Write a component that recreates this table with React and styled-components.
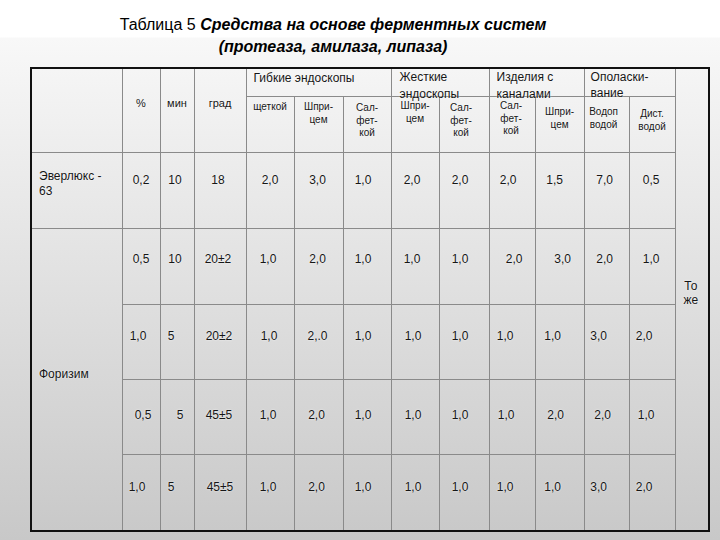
import React from 'react'
import styled, { createGlobalStyle } from 'styled-components'

const GlobalStyle = createGlobalStyle`
  html, body {
    margin: 0;
    padding: 0;
  }

  body {
    width: 720px;
    height: 540px;
    overflow: hidden;
    font-family: 'Liberation Sans', Arial, sans-serif;
    color: #111;
    background: linear-gradient(to bottom, #fff 0px, #fff 37px, #f8f8f8 38px, #c8c8c8 540px);
  }
`

const Slide = styled.div`
  width: 720px;
  height: 540px;
  box-sizing: border-box;
  padding-top: 14px;
`

const Title = styled.h1`
  margin: 0;
  width: 666px;
  text-align: center;
  font-size: 16px;
  line-height: 22px;
  font-weight: normal;
  color: #000;
`

const Accent = styled.em`
  font-weight: bold;
  font-style: italic;
`

const Table = styled.table`
  margin: 9px 0 0 30px;
  border-collapse: collapse;
  table-layout: fixed;
  width: 678px;
  border: 2px solid #111;
`

const Row = styled.tr`
  height: ${p => p.$h}px;
`

const Cell = styled.td`
  box-sizing: border-box;
  border: 1px solid #8a8a8a;
  vertical-align: top;
  text-align: center;
  font-size: 12px;
  line-height: 14px;
  color: #161616;
  padding: ${p => p.$top || 0}px ${p => (p.$dx < 0 ? -2 * p.$dx : 0)}px 0 ${p => (p.$dx > 0 ? 2 * p.$dx : 0)}px;
  text-shadow: 0 0 2px rgba(255, 255, 255, 0.9);
`

const NameCell = styled(Cell)`
  text-align: left;
  padding-left: 7px;
  line-height: 15px;
`

const UnitCell = styled(Cell)`
  font-size: 11px;
`

const GroupCell = styled(Cell)`
  text-align: left;
  padding-left: ${p => p.$left}px;
  line-height: ${p => p.$lh}px;
`

const GroupText = styled.div`
  height: 26px;
  overflow: visible;
  white-space: nowrap;
`

const SubCell = styled(Cell)`
  font-size: 10px;
  line-height: 12.5px;
`

const SideCell = styled(Cell)`
  line-height: 14px;
  padding-left: 0;
  padding-right: 2px;
`

const widths = [91, 38, 34, 52, 48, 49, 48, 48, 50, 46, 49, 45, 46, 34]

const groups = [
  { span: 3, left: 7, lh: 16, top: 1, lines: ['Гибкие эндоскопы'] },
  { span: 2, left: 8, lh: 17, top: 0, lines: ['Жесткие', 'эндоскопы'] },
  { span: 2, left: 7, lh: 17, top: 0, lines: ['Изделия с', 'каналами'] },
  { span: 2, left: 6, lh: 16, top: 0, lines: ['Ополаски-', 'вание'] },
]

const subs = [
  { top: 4, dx: 0, lines: ['щеткой'] },
  { top: 4, dx: 0, lines: ['Шпри-', 'цем'] },
  { top: 5, dx: 0, lines: ['Сал-', 'фет-', 'кой'] },
  { top: 3, dx: 0, lines: ['Шпри-', 'цем'] },
  { top: 5, dx: -3, lines: ['Сал-', 'фет-', 'кой'] },
  { top: 3, dx: -1, lines: ['Сал-', 'фет-', 'кой'] },
  { top: 9, dx: 0, lines: ['Шпри-', 'цем'] },
  { top: 9, dx: -3, lines: ['Водоп', 'водой'] },
  { top: 11, dx: 0, lines: ['Дист.', 'водой'] },
]

const rows = [
  {
    h: 76, top: 20,
    cells: [['0,2', 0], ['10', -2], ['18', -2], ['2,0', 0], ['3,0', -1], ['1,0', -4], ['2,0', -3], ['2,0', -4], ['2,0', -4], ['1,5', -5], ['7,0', -2], ['0,5', -1]],
  },
  {
    h: 76, top: 23,
    cells: [['0,5', 0], ['10', -2], ['20±2', -2], ['1,0', -2], ['2,0', -1], ['1,0', -4], ['1,0', -3], ['1,0', -4], ['2,0', 2], ['3,0', 3], ['2,0', -2], ['1,0', -1]],
  },
  {
    h: 75, top: 24,
    cells: [['1,0', -3], ['5', -6], ['20±2', -1], ['1,0', -1], ['2,.0', -1], ['1,0', -4], ['1,0', -2], ['1,0', -4], ['1,0', -7], ['1,0', -7], ['3,0', -8], ['2,0', -8]],
  },
  {
    h: 75, top: 28,
    cells: [['0,5', 2], ['5', 3], ['45±5', -1], ['1,0', -2], ['2,0', -2], ['1,0', -4], ['1,0', -2], ['1,0', -4], ['1,0', -6], ['2,0', -4], ['2,0', -4], ['1,0', -6]],
  },
  {
    h: 76, top: 25,
    cells: [['1,0', -4], ['5', -6], ['45±5', 0], ['1,0', -2], ['2,0', -2], ['1,0', -4], ['1,0', -2], ['1,0', -4], ['1,0', -7], ['1,0', -7], ['3,0', -8], ['2,0', -8]],
  },
]

function Lines({ lines }) {
  return lines.map((line, i) => (
    <React.Fragment key={i}>
      {i > 0 && <br />}
      {line}
    </React.Fragment>
  ))
}

function DataCells({ row }) {
  return row.cells.map(([value, dx], i) => (
    <Cell key={i} $top={row.top} $dx={dx}>{value}</Cell>
  ))
}

export default function App() {
  return (
    <>
      <GlobalStyle />
      <Slide>
        <Title>
          Таблица 5 <Accent>Средства на основе ферментных систем</Accent>
          <br />
          <Accent>(протеаза, амилаза, липаза)</Accent>
        </Title>

        <Table>
          <colgroup>
            {widths.map((w, i) => <col key={i} style={{ width: w }} />)}
          </colgroup>
          <tbody>
            <Row $h={28}>
              <Cell rowSpan={2} />
              <UnitCell rowSpan={2} $top={27}>%</UnitCell>
              <UnitCell rowSpan={2} $top={27}>мин</UnitCell>
              <UnitCell rowSpan={2} $top={27}>град</UnitCell>
              {groups.map((g, i) => (
                <GroupCell key={i} colSpan={g.span} $left={g.left} $lh={g.lh} $top={g.top}>
                  <GroupText><Lines lines={g.lines} /></GroupText>
                </GroupCell>
              ))}
              <SideCell rowSpan={7} $top={210}>То<br />же</SideCell>
            </Row>
            <Row $h={56}>
              {subs.map((s, i) => (
                <SubCell key={i} $top={s.top} $dx={s.dx}><Lines lines={s.lines} /></SubCell>
              ))}
            </Row>

            <Row $h={rows[0].h}>
              <NameCell $top={16}>Эверлюкс -<br />63</NameCell>
              <DataCells row={rows[0]} />
            </Row>
            <Row $h={rows[1].h}>
              <NameCell rowSpan={4} $top={138}>Форизим</NameCell>
              <DataCells row={rows[1]} />
            </Row>
            {rows.slice(2).map((row, i) => (
              <Row key={i} $h={row.h}>
                <DataCells row={row} />
              </Row>
            ))}
          </tbody>
        </Table>
      </Slide>
    </>
  )
}
